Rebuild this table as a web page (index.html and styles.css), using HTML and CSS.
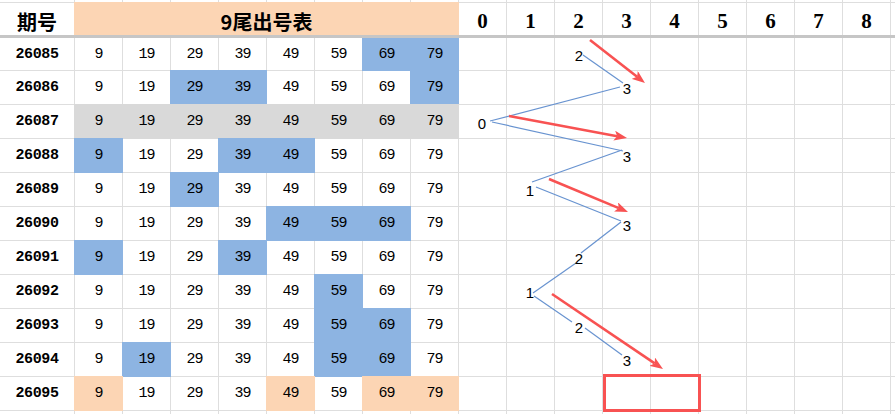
FILE: index.html
```
<!DOCTYPE html>
<html lang="zh">
<head>
<meta charset="utf-8">
<title>9尾出号表</title>
<link rel="stylesheet" href="styles.css">
</head>
<body>
<div class="page">
  <div class="sheet">
    <!-- partial top row -->
    <div class="c"></div><div class="c"></div><div class="c"></div><div class="c"></div><div class="c"></div><div class="c"></div><div class="c"></div><div class="c"></div><div class="c"></div><div class="c"></div><div class="c"></div><div class="c"></div><div class="c"></div><div class="c"></div><div class="c"></div><div class="c"></div><div class="c"></div><div class="c"></div><div class="c"></div>

    <!-- header -->
    <div class="c h hz">期号</div>
    <div class="c h title o">9尾出号表</div>
    <div class="c h hn">0</div><div class="c h hn">1</div><div class="c h hn">2</div><div class="c h hn">3</div><div class="c h hn">4</div><div class="c h hn">5</div><div class="c h hn">6</div><div class="c h hn">7</div><div class="c h hn">8</div>
    <div class="c"></div>

    <div class="band"></div>

    <!-- 26085 -->
    <div class="c p">26085</div>
    <div class="c">9</div><div class="c">19</div><div class="c">29</div><div class="c">39</div><div class="c">49</div><div class="c">59</div><div class="c b">69</div><div class="c b">79</div>
    <div class="c"></div><div class="c"></div><div class="c"></div><div class="c"></div><div class="c"></div><div class="c"></div><div class="c"></div><div class="c"></div><div class="c"></div><div class="c"></div>

    <!-- 26086 -->
    <div class="c p">26086</div>
    <div class="c">9</div><div class="c">19</div><div class="c b">29</div><div class="c b">39</div><div class="c">49</div><div class="c">59</div><div class="c">69</div><div class="c b">79</div>
    <div class="c"></div><div class="c"></div><div class="c"></div><div class="c"></div><div class="c"></div><div class="c"></div><div class="c"></div><div class="c"></div><div class="c"></div><div class="c"></div>

    <!-- 26087 -->
    <div class="c p">26087</div>
    <div class="c g">9</div><div class="c g">19</div><div class="c g">29</div><div class="c g">39</div><div class="c g">49</div><div class="c g">59</div><div class="c g">69</div><div class="c g">79</div>
    <div class="c"></div><div class="c"></div><div class="c"></div><div class="c"></div><div class="c"></div><div class="c"></div><div class="c"></div><div class="c"></div><div class="c"></div><div class="c"></div>

    <!-- 26088 -->
    <div class="c p">26088</div>
    <div class="c b">9</div><div class="c">19</div><div class="c">29</div><div class="c b">39</div><div class="c b">49</div><div class="c">59</div><div class="c">69</div><div class="c">79</div>
    <div class="c"></div><div class="c"></div><div class="c"></div><div class="c"></div><div class="c"></div><div class="c"></div><div class="c"></div><div class="c"></div><div class="c"></div><div class="c"></div>

    <!-- 26089 -->
    <div class="c p">26089</div>
    <div class="c">9</div><div class="c">19</div><div class="c b">29</div><div class="c">39</div><div class="c">49</div><div class="c">59</div><div class="c">69</div><div class="c">79</div>
    <div class="c"></div><div class="c"></div><div class="c"></div><div class="c"></div><div class="c"></div><div class="c"></div><div class="c"></div><div class="c"></div><div class="c"></div><div class="c"></div>

    <!-- 26090 -->
    <div class="c p">26090</div>
    <div class="c">9</div><div class="c">19</div><div class="c">29</div><div class="c">39</div><div class="c b">49</div><div class="c b">59</div><div class="c b">69</div><div class="c">79</div>
    <div class="c"></div><div class="c"></div><div class="c"></div><div class="c"></div><div class="c"></div><div class="c"></div><div class="c"></div><div class="c"></div><div class="c"></div><div class="c"></div>

    <!-- 26091 -->
    <div class="c p">26091</div>
    <div class="c b">9</div><div class="c">19</div><div class="c">29</div><div class="c b">39</div><div class="c">49</div><div class="c">59</div><div class="c">69</div><div class="c">79</div>
    <div class="c"></div><div class="c"></div><div class="c"></div><div class="c"></div><div class="c"></div><div class="c"></div><div class="c"></div><div class="c"></div><div class="c"></div><div class="c"></div>

    <!-- 26092 -->
    <div class="c p">26092</div>
    <div class="c">9</div><div class="c">19</div><div class="c">29</div><div class="c">39</div><div class="c">49</div><div class="c b">59</div><div class="c">69</div><div class="c">79</div>
    <div class="c"></div><div class="c"></div><div class="c"></div><div class="c"></div><div class="c"></div><div class="c"></div><div class="c"></div><div class="c"></div><div class="c"></div><div class="c"></div>

    <!-- 26093 -->
    <div class="c p">26093</div>
    <div class="c">9</div><div class="c">19</div><div class="c">29</div><div class="c">39</div><div class="c">49</div><div class="c b">59</div><div class="c b">69</div><div class="c">79</div>
    <div class="c"></div><div class="c"></div><div class="c"></div><div class="c"></div><div class="c"></div><div class="c"></div><div class="c"></div><div class="c"></div><div class="c"></div><div class="c"></div>

    <!-- 26094 -->
    <div class="c p">26094</div>
    <div class="c">9</div><div class="c b">19</div><div class="c">29</div><div class="c">39</div><div class="c">49</div><div class="c b">59</div><div class="c b">69</div><div class="c">79</div>
    <div class="c"></div><div class="c"></div><div class="c"></div><div class="c"></div><div class="c"></div><div class="c"></div><div class="c"></div><div class="c"></div><div class="c"></div><div class="c"></div>

    <!-- 26095 -->
    <div class="c p">26095</div>
    <div class="c o">9</div><div class="c">19</div><div class="c">29</div><div class="c">39</div><div class="c o">49</div><div class="c">59</div><div class="c o">69</div><div class="c o">79</div>
    <div class="c"></div><div class="c"></div><div class="c"></div><div class="c"></div><div class="c"></div><div class="c"></div><div class="c"></div><div class="c"></div><div class="c"></div><div class="c"></div>

    <!-- partial bottom row -->
    <div class="c"></div><div class="c"></div><div class="c"></div><div class="c"></div><div class="c"></div><div class="c"></div><div class="c"></div><div class="c"></div><div class="c"></div><div class="c"></div><div class="c"></div><div class="c"></div><div class="c"></div><div class="c"></div><div class="c"></div><div class="c"></div><div class="c"></div><div class="c"></div><div class="c"></div>
  </div>

  <svg class="chart" width="895" height="414" viewBox="0 0 895 414">
    <defs>
      <marker id="ah" markerUnits="userSpaceOnUse" markerWidth="13" markerHeight="10" refX="3" refY="5" orient="auto">
        <path d="M0,0 L13,5 L0,10 L3,5 z" fill="#f85252"/>
      </marker>
    </defs>
    <g class="trend">
      <line x1="583" y1="55" x2="623" y2="83"/>
      <line x1="620" y1="87" x2="490" y2="121"/>
      <line x1="492" y1="122" x2="623" y2="151"/>
      <line x1="622" y1="150" x2="532" y2="182"/>
      <line x1="536" y1="187" x2="621" y2="221"/>
      <line x1="621" y1="222" x2="581" y2="253"/>
      <line x1="576" y1="263" x2="533" y2="293"/>
      <line x1="534" y1="296" x2="572" y2="322"/>
      <line x1="585" y1="328" x2="622" y2="355"/>
    </g>
    <g class="arrows">
      <line x1="590" y1="40" x2="637.1" y2="76.8" marker-end="url(#ah)"/>
      <line x1="509" y1="116" x2="617.2" y2="136.2" marker-end="url(#ah)"/>
      <line x1="549" y1="179" x2="618.8" y2="208.1" marker-end="url(#ah)"/>
      <line x1="552" y1="294" x2="654.7" y2="363.4" marker-end="url(#ah)"/>
    </g>
    <rect class="box" x="604.5" y="375.5" width="95" height="35"/>
    <g class="labels">
      <text x="579" y="60.5">2</text>
      <text x="627" y="93.5">3</text>
      <text x="482" y="128.5">0</text>
      <text x="627" y="161.5">3</text>
      <text x="530" y="195.5">1</text>
      <text x="627" y="230.5">3</text>
      <text x="579" y="263.5">2</text>
      <text x="530" y="297.5">1</text>
      <text x="579" y="332.5">2</text>
      <text x="627" y="365.5">3</text>
    </g>
  </svg>
</div>
</body>
</html>
```

FILE: styles.css
```
html, body {
  margin: 0;
  padding: 0;
  background: #ffffff;
}

.page {
  position: relative;
  width: 895px;
  height: 414px;
  overflow: hidden;
}

.sheet {
  display: grid;
  grid-template-columns: 74px repeat(17, 47px) 4px;
  grid-template-rows: 2px 32px 1px 32px repeat(10, 33px) 3px;
  gap: 1px;
  width: 895px;
  height: 414px;
  background: #dedede;
  font-family: "Liberation Mono", "DejaVu Sans Mono", monospace;
  font-size: 15px;
  letter-spacing: -1px;
  color: #000;
}

.c {
  background: #ffffff;
  display: flex;
  align-items: center;
  justify-content: center;
  line-height: 1;
  overflow: hidden;
}

.h {
  padding-top: 5px;
  box-sizing: border-box;
  letter-spacing: 0;
}

.hz {
  font-family: "Noto Sans CJK SC", sans-serif;
  font-weight: 700;
  font-size: 20px;
}

.title {
  grid-column: span 8;
  font-family: "Noto Sans CJK SC", sans-serif;
  font-weight: 700;
  font-size: 20px;
}

.hn {
  font-family: "Liberation Serif", serif;
  font-weight: 700;
  font-size: 21px;
}

.p {
  font-weight: 700;
  font-size: 15px;
  letter-spacing: -0.4px;
}

.band {
  grid-column: 1 / -1;
  margin: -1px 0;
  background: #c6c6c6;
  z-index: 2;
}

.b {
  background: #8db4e2;
  box-shadow: 0 0 0 1px #8db4e2;
}

.g {
  background: #d9d9d9;
  box-shadow: 0 0 0 1px #d9d9d9;
}

.o {
  background: #fcd5b4;
  box-shadow: 0 0 0 1px #fcd5b4;
}

.chart {
  position: absolute;
  left: 0;
  top: 0;
}

.trend line {
  stroke: #6893d0;
  stroke-width: 1.2;
  fill: none;
}

.arrows line {
  stroke: #f85252;
  stroke-width: 2.6;
}

.box {
  fill: none;
  stroke: #f85252;
  stroke-width: 3;
}

.labels text {
  font-family: "Liberation Sans", "DejaVu Sans", sans-serif;
  font-size: 15px;
  text-anchor: middle;
  fill: #000;
}
```
